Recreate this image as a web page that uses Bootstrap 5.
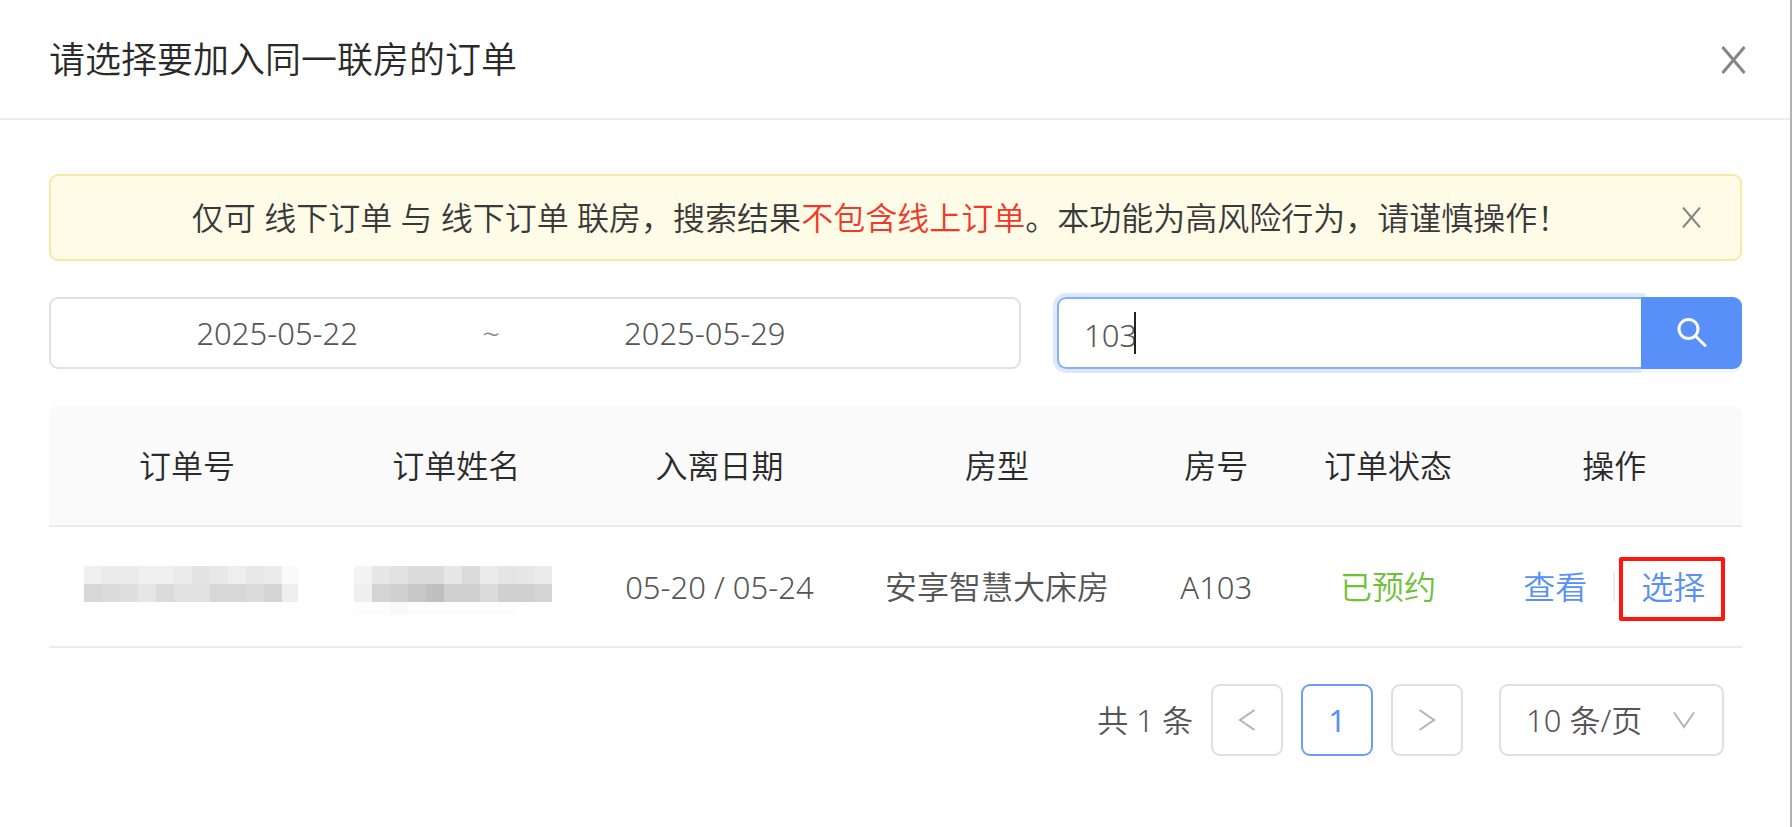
<!DOCTYPE html>
<html lang="zh-CN">
<head>
<meta charset="utf-8">
<meta name="viewport" content="width=device-width, initial-scale=1">
<title>请选择要加入同一联房的订单</title>
<link href="https://cdn.jsdelivr.net/npm/bootstrap@5.3.0/dist/css/bootstrap.min.css" rel="stylesheet">
<style>
  body { font-family: "Noto Sans", "Noto Sans CJK SC", sans-serif; font-size: 31px; font-weight: 350; line-height: 48px; color: #555; background: #fff; }
  a { color: #588ff8; }
  .dialog-page { border-right: 2px solid #b3b3b3; }
  .dialog-head { height: 120px; padding: 2px 44px 0 49px; border-bottom: 2px solid #ececec; }
  .dialog-title { font-size: 36px; font-weight: 350; line-height: 48px; color: #2a2a2a; }
  .dialog-body { padding: 54px 48px 71px 49px; gap: 36px; }
  .icon-btn { border: 0; background: none; padding: 0; display: flex; color: #858585; }
  .notice { height: 87px; padding: 0 39px 0 28px; margin: 0; border: 2px solid #f9e8a6; border-radius: 9px; background: #fefbe7; color: #383838; font-size: 32px; }
  .notice-strong { color: #f0382b; }
  .filters { display: grid; grid-template-columns: minmax(0, 972fr) minmax(0, 685fr); gap: 36px; }
  .range-box { height: 72px; padding: 0 113px 0 25px; border: 2px solid #e0e0e0; border-radius: 9px; }
  .range-box input { border: 0; background: none; min-width: 0; padding: 0; outline: 0; color: #555; font-weight: 350; }
  .range-sep { width: 26px; color: #888; }
  .search-box { height: 72px; }
  .search-field { border: 2px solid #81b1ff; border-right: 0; border-radius: 9px 0 0 9px; box-shadow: 0 0 0 4px #dfe9fd; }
  .search-field input { border: 0; outline: 0; background: none; padding: 3px 0 0 25px; color: #555; font-weight: 350; height: 68px; }
  .text-caret { left: 75px; top: 13px; width: 2px; height: 42px; background: #222; }
  .search-btn { flex: none; width: 101px; border-radius: 0 9px 9px 0; background: #588ff8; border: 0; box-shadow: 0 4px 0 #f7f7f8; color: #fff; position: relative; }
  .orders { table-layout: fixed; border-collapse: separate; border-spacing: 0; }
  .orders th, .orders td { height: 121px; padding: 0; text-align: center; vertical-align: middle; border-bottom: 2px solid #ececec; }
  .orders th { height: 122px; padding-top: 2px; background: #fafafa; font-weight: 350; font-size: 32px; color: #2a2a2a; }
  .orders .cjk-cell { font-size: 32px; }
  .orders th:first-child { border-top-left-radius: 9px; }
  .orders th:last-child { border-top-right-radius: 9px; }
  .orders svg { display: block; margin: auto; overflow: visible; }
  .w-no { width: 16.3%; } .w-name { width: 15.5%; } .w-date { width: 15.6%; } .w-type { width: 17.2%; }
  .w-room { width: 8.7%; } .w-state { width: 11.6%; }
  .orders .state-ok { color: #6fc136; }
  .actions { gap: 26px; }
  .actions-rule { width: 2px; height: 29px; background: #ececec; }
  .highlight-frame { inset: -6px -20px -10px -22px; border: 4px solid #ff1509; border-radius: 2px; pointer-events: none; }
  .pager { gap: 18px; padding-right: 18px; }
  .page-btn { width: 72px; height: 72px; border: 2px solid #dfdfdf; border-radius: 9px; background: #fff; color: #b3b3b3; padding: 0; font-weight: 400; }
  .page-btn.current { border-color: #6c9ef9; color: #588ff8; }
  .size-box { margin-left: 18px; width: 225px; }
  .size-box select { appearance: none; width: 100%; height: 72px; border: 2px solid #dfdfdf; border-radius: 9px; background: #fff; padding: 0 60px 0 25px; color: #555; font-weight: 350; }
  .size-box svg { right: 29px; top: 27px; pointer-events: none; }
</style>
</head>
<body>
<main class="dialog-page min-vh-100">
  <header class="dialog-head d-flex align-items-center justify-content-between">
    <h1 class="dialog-title m-0">请选择要加入同一联房的订单</h1>
    <button type="button" class="icon-btn" aria-label="关闭">
      <svg width="25" height="28" viewBox="0 0 25 28" fill="none" stroke="currentColor" stroke-width="3"><path d="M1.5 1 23.5 27M23.5 1 1.5 27"/></svg>
    </button>
  </header>
  <div class="dialog-body d-flex flex-column">
    <div class="notice alert d-flex align-items-center" role="alert">
      <div class="flex-fill text-center">仅可 线下订单 与 线下订单 联房，搜索结果<span class="notice-strong">不包含线上订单</span>。本功能为高风险行为，请谨慎操作！</div>
      <button type="button" class="icon-btn" aria-label="关闭提示">
        <svg width="19" height="21" viewBox="0 0 19 21" fill="none" stroke="currentColor" stroke-width="2"><path d="M1 .5 18 20.500M18 .5 1 20.500"/></svg>
      </button>
    </div>
    <div class="filters">
      <div class="range-box d-flex align-items-center">
        <input class="flex-fill w-50 text-center" type="text" value="2025-05-22" aria-label="开始日期">
        <span class="range-sep text-center">~</span>
        <input class="flex-fill w-50 text-center" type="text" value="2025-05-29" aria-label="结束日期">
      </div>
      <form class="search-box d-flex" role="search">
        <div class="search-field flex-fill position-relative">
          <input class="w-100" type="text" value="103" aria-label="搜索订单">
          <span class="text-caret position-absolute"></span>
        </div>
        <button type="button" class="search-btn d-flex align-items-center justify-content-center" aria-label="搜索">
          <svg width="30" height="30" viewBox="0 0 30 30" fill="none" stroke="currentColor" stroke-width="3" stroke-linecap="round"><circle cx="11.500" cy="11" r="9.500"/><path d="m18.500 18 9.500 9.500"/></svg>
        </button>
      </form>
    </div>
    <table class="orders w-100">
      <colgroup><col class="w-no"><col class="w-name"><col class="w-date"><col class="w-type"><col class="w-room"><col class="w-state"><col></colgroup>
      <thead><tr><th scope="col">订单号</th><th scope="col">订单姓名</th><th scope="col">入离日期</th><th scope="col">房型</th><th scope="col">房号</th><th scope="col">订单状态</th><th scope="col">操作</th></tr></thead>
      <tbody>
        <tr>
          <td>
            <svg width="222" height="50" viewBox="0 0 222 50" shape-rendering="crispEdges" aria-hidden="true">
              <g transform="translate(8 4)">
                <path fill="#f0f0f0" d="M0 0h18v18H0zM54 0h36v18H54z"/><path fill="#ebebeb" d="M18 0h36v18H18zM90 0h18v18H90zM180 0h18v18h-18z"/><path fill="#e3e3e3" d="M108 0h18v18h-18z"/><path fill="#e8e8e8" d="M126 0h18v18h-18zM162 0h18v18h-18z"/><path fill="#eee" d="M144 0h18v18h-18zM198 18h16v18h-16z"/><path fill="#fafafa" d="M198 0h16v18h-16z"/>
                <path fill="#d7d7d7" d="M0 18h18v18H0zM126 18h36v18h-36z"/><path fill="#dbdbdb" d="M18 18h18v18H18zM72 18h18v18H72zM162 18h18v18h-18z"/><path fill="#dedede" d="M36 18h18v18H36z"/><path fill="#e6e6e6" d="M54 18h18v18H54z"/><path fill="#e1e1e1" d="M90 18h36v18H90z"/><path fill="#d4d4d4" d="M180 18h18v18h-18z"/>
              </g>
            </svg>
          </td>
          <td>
            <svg width="204" height="50" viewBox="0 0 204 50" shape-rendering="crispEdges" aria-hidden="true">
              <g transform="translate(0 4)">
                <path fill="#f4f4f4" d="M0 0h18v18H0z"/><path fill="#e7e7e7" d="M18 0h18v18H18zM90 0h18v18H90zM162 0h18v18h-18z"/><path fill="#e1e1e1" d="M36 0h18v18H36z"/><path fill="#dbdbdb" d="M54 0h36v18H54zM108 0h18v18h-18zM126 18h18v18h-18z"/><path fill="#ebebeb" d="M126 0h18v18h-18zM180 0h18v18h-18z"/><path fill="#e4e4e4" d="M144 0h18v18h-18z"/>
                <path fill="#efefef" d="M0 18h18v18H0z"/><path fill="#d4d4d4" d="M18 18h18v18H18zM180 18h18v18h-18z"/><path fill="#d0d0d0" d="M36 18h18v18H36zM90 18h36v18H90zM144 18h36v18h-36z"/><path fill="#c8c8c8" d="M54 18h18v18H54z"/><path fill="#c0c0c0" d="M72 18h18v18H72z"/>
                <path fill="#fdfdfd" d="M0 36h36v13H0zM54 36h108v13H54z"/><path fill="#f9f9f9" d="M36 36h18v13H36z"/>
              </g>
            </svg>
          </td>
          <td>05-20 / 05-24</td>
          <td class="cjk-cell">安享智慧大床房</td>
          <td>A103</td>
          <td class="cjk-cell state-ok">已预约</td>
          <td class="cjk-cell">
            <div class="actions d-flex align-items-center justify-content-center">
              <a href="#" class="text-decoration-none">查看</a>
              <span class="actions-rule"></span>
              <a href="#" class="text-decoration-none position-relative">选择<span class="highlight-frame position-absolute"></span></a>
            </div>
          </td>
        </tr>
      </tbody>
    </table>
    <nav class="pager d-flex align-items-center justify-content-end" aria-label="分页">
      <span>共 1 条</span>
      <button type="button" class="page-btn" aria-label="上一页"><svg class="d-block mx-auto" width="18" height="22" viewBox="0 0 18 22" fill="none" stroke="currentColor" stroke-width="2"><path d="M16.500 1 2 11l14.500 10"/></svg></button>
      <button type="button" class="page-btn current" aria-current="page">1</button>
      <button type="button" class="page-btn" aria-label="下一页"><svg class="d-block mx-auto" width="18" height="22" viewBox="0 0 18 22" fill="none" stroke="currentColor" stroke-width="2"><path d="M1.500 1 16 11 1.500 21"/></svg></button>
      <div class="size-box position-relative">
        <select aria-label="每页条数"><option>10 条/页</option><option>20 条/页</option><option>50 条/页</option></select>
        <svg class="position-absolute" width="22" height="18" viewBox="0 0 22 18" fill="none" stroke="#b3b3b3" stroke-width="2"><path d="M1 1.500 11 16 21 1.500"/></svg>
      </div>
    </nav>
  </div>
</main>
<script src="https://cdn.jsdelivr.net/npm/bootstrap@5.3.0/dist/js/bootstrap.bundle.min.js"></script>
</body>
</html>
